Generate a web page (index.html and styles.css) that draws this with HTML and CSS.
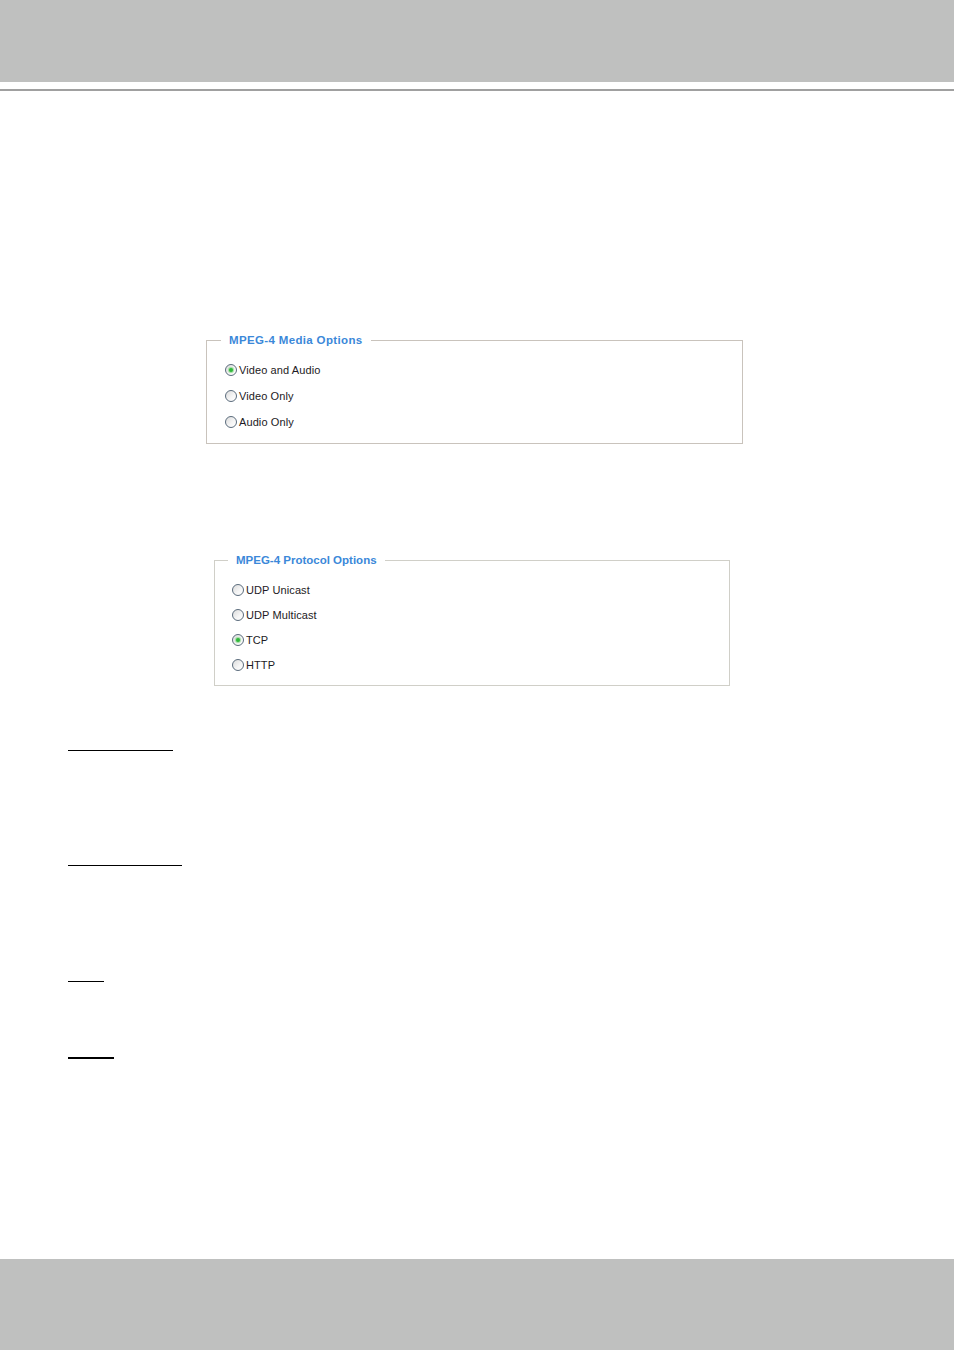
FILE: index.html
```html
<!DOCTYPE html>
<html>
<head>
<meta charset="utf-8">
<link rel="stylesheet" href="styles.css">
</head>
<body>
<div class="page">
  <div class="header"></div>
  <div class="rule"></div>

  <div class="group group-media">
    <span class="legend">MPEG-4 Media Options</span>
    <label class="opt"><span class="radio checked"></span>Video and Audio</label>
    <label class="opt"><span class="radio"></span>Video Only</label>
    <label class="opt"><span class="radio"></span>Audio Only</label>
  </div>

  <div class="group group-proto">
    <span class="legend">MPEG-4 Protocol Options</span>
    <label class="opt"><span class="radio"></span>UDP Unicast</label>
    <label class="opt"><span class="radio"></span>UDP Multicast</label>
    <label class="opt"><span class="radio checked"></span>TCP</label>
    <label class="opt"><span class="radio"></span>HTTP</label>
  </div>

  <div class="uline u1"></div>
  <div class="uline u2"></div>
  <div class="uline u3"></div>
  <div class="uline u4"></div>

  <div class="footer"></div>
</div>
</body>
</html>
```

FILE: styles.css
```css
html, body {
  margin: 0;
  padding: 0;
  background: #ffffff;
}

.page {
  width: 954px;
  height: 1350px;
  display: flex;
  flex-direction: column;
  font-family: "Liberation Sans", Arial, sans-serif;
}

.header {
  height: 82px;
  background: #bfc0bf;
  flex: none;
}

.rule {
  margin-top: 7px;
  height: 2px;
  background: #a0a0a0;
  flex: none;
}

.group {
  position: relative;
  border: 1px solid #c9c3bc;
  display: flex;
  flex-direction: column;
  flex: none;
  box-sizing: border-box;
}

.group-media {
  margin-top: 249px;
  margin-left: 206px;
  width: 537px;
  padding: 16px 0 8px 18px;
}

.group-proto {
  margin-top: 116px;
  margin-left: 214px;
  width: 516px;
  padding: 16px 0 8px 17px;
  border-color: #d0cfc8;
}

.legend {
  position: absolute;
  top: -8px;
  left: 14px;
  padding: 0 8px;
  background: #ffffff;
  color: #3b88d9;
  font-weight: bold;
  font-size: 11.5px;
  line-height: 14px;
}

.group-media .legend {
  letter-spacing: 0.35px;
}

.group-proto .legend {
  left: 13px;
}

.opt {
  display: flex;
  align-items: center;
  gap: 2px;
  font-size: 11px;
  letter-spacing: 0.1px;
  color: #1d1a24;
}

.group-media .opt { height: 26px; }
.group-proto .opt { height: 25px; }

.radio {
  width: 10px;
  height: 10px;
  border: 1px solid #5a6b7c;
  border-radius: 50%;
  background: linear-gradient(135deg, #dcdcdc 0%, #f6f6f6 60%, #ffffff 100%);
  display: flex;
  align-items: center;
  justify-content: center;
  flex: none;
}

.radio.checked::after {
  content: "";
  width: 4px;
  height: 4px;
  border-radius: 50%;
  background: #2fb83a;
  box-shadow: 0 0 1px 1px #9edb9f;
}

.uline {
  margin-left: 68px;
  height: 1px;
  background: #000000;
  flex: none;
}

.u1 { margin-top: 64px; width: 105px; }
.u2 { margin-top: 114px; width: 114px; }
.u3 { margin-top: 115px; width: 36px; }
.u4 { margin-top: 75px; width: 46px; height: 2px; }

.footer {
  margin-top: auto;
  height: 91px;
  background: #bfc0bf;
  flex: none;
}
```
